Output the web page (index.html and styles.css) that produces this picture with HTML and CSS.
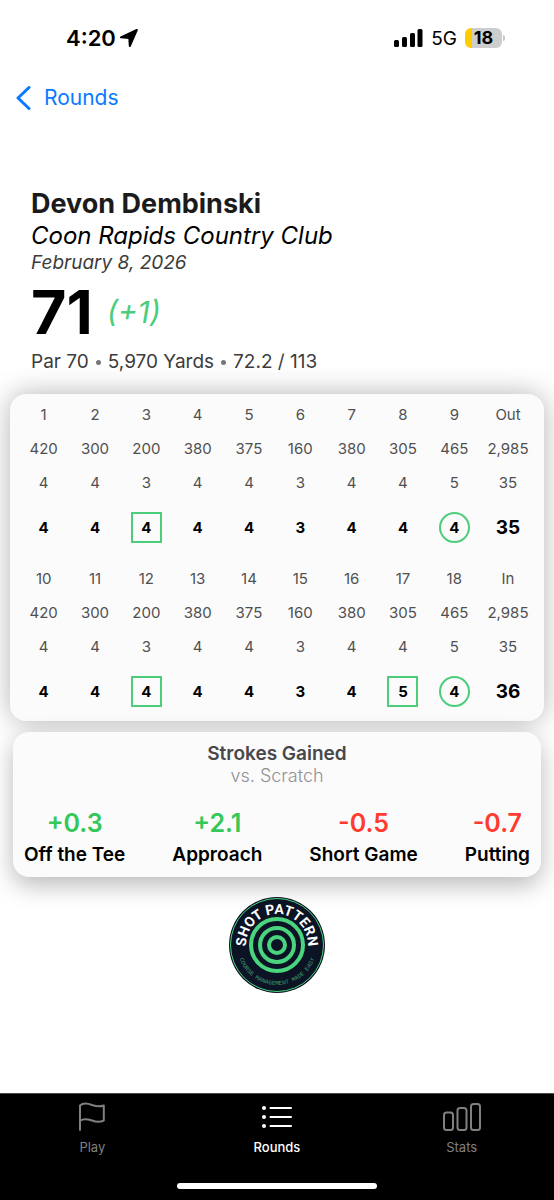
FILE: index.html
```html
<!DOCTYPE html>
<html lang="en">
<head>
<meta charset="utf-8">
<meta name="viewport" content="width=device-width, initial-scale=1">
<title>Round – Devon Dembinski</title>
<link rel="stylesheet" href="styles.css">
</head>
<body>
<header class="status">
  <div class="status-time">
    <span>4:20</span>
    <svg class="location" width="18" height="18" viewBox="0 0 18 18" aria-hidden="true"><path d="M16.800 1 1 8.300l8.300.6.500 8.100z"/></svg>
  </div>
  <div class="status-right">
    <svg width="29" height="18" viewBox="0 0 29 18" aria-hidden="true"><rect x="0" y="11" width="5" height="7" rx="1.500"/><rect x="8" y="8" width="5" height="10" rx="1.500"/><rect x="16" y="4" width="5" height="14" rx="1.500"/><rect x="23.500" y="0" width="5" height="18" rx="1.500"/></svg>
    <span class="network">5G</span>
    <span class="battery"><span class="battery-level">18</span></span>
  </div>
</header>

<nav class="back-nav">
  <a class="back" href="#rounds">
    <svg width="15" height="24" viewBox="0 0 15 24" aria-hidden="true"><path d="M13 1.500 2 12l11 10.500"/></svg>
    <span>Rounds</span>
  </a>
</nav>

<main>
  <section class="summary">
    <h1 class="player">Devon Dembinski</h1>
    <p class="course">Coon Rapids Country Club</p>
    <p class="date">February 8, 2026</p>
    <p class="total"><strong>71</strong><em>(+1)</em></p>
    <p class="details"><span>Par 70</span><i class="dot"></i><span>5,970 Yards</span><i class="dot"></i><span>72.2 / 113</span></p>
  </section>

  <section class="card scorecard" aria-label="Scorecard">
    <table>
      <colgroup><col span="9"><col class="sum-col"></colgroup>
      <tbody>
        <tr><th>1</th><th>2</th><th>3</th><th>4</th><th>5</th><th>6</th><th>7</th><th>8</th><th>9</th><th>Out</th></tr>
        <tr><td>420</td><td>300</td><td>200</td><td>380</td><td>375</td><td>160</td><td>380</td><td>305</td><td>465</td><td>2,985</td></tr>
        <tr><td>4</td><td>4</td><td>3</td><td>4</td><td>4</td><td>3</td><td>4</td><td>4</td><td>5</td><td>35</td></tr>
        <tr class="score"><td>4</td><td>4</td><td><span class="mark">4</span></td><td>4</td><td>4</td><td>3</td><td>4</td><td>4</td><td><span class="mark birdie">4</span></td><td class="sum">35</td></tr>
      </tbody>
    </table>
    <table>
      <colgroup><col span="9"><col class="sum-col"></colgroup>
      <tbody>
        <tr><th>10</th><th>11</th><th>12</th><th>13</th><th>14</th><th>15</th><th>16</th><th>17</th><th>18</th><th>In</th></tr>
        <tr><td>420</td><td>300</td><td>200</td><td>380</td><td>375</td><td>160</td><td>380</td><td>305</td><td>465</td><td>2,985</td></tr>
        <tr><td>4</td><td>4</td><td>3</td><td>4</td><td>4</td><td>3</td><td>4</td><td>4</td><td>5</td><td>35</td></tr>
        <tr class="score"><td>4</td><td>4</td><td><span class="mark">4</span></td><td>4</td><td>4</td><td>3</td><td>4</td><td><span class="mark">5</span></td><td><span class="mark birdie">4</span></td><td class="sum">36</td></tr>
      </tbody>
    </table>
  </section>

  <section class="card gained">
    <h2>Strokes Gained</h2>
    <p class="versus">vs. Scratch</p>
    <dl>
      <div><dt>Off the Tee</dt><dd class="gain">+0.3</dd></div>
      <div><dt>Approach</dt><dd class="gain">+2.1</dd></div>
      <div><dt>Short Game</dt><dd class="loss">-0.5</dd></div>
      <div><dt>Putting</dt><dd class="loss">-0.7</dd></div>
    </dl>
  </section>

  <svg class="logo" width="96" height="96" viewBox="-48 -48 96 96" role="img" aria-label="Shot Pattern">
    <defs>
      <path id="arc-top" d="M0 31A31 31 0 0 1 0 -31A31 31 0 0 1 0 31"/>
      <path id="arc-bottom" d="M0 -40A40 40 0 0 0 0 40A40 40 0 0 0 0 -40"/>
    </defs>
    <circle class="disc" r="48"/>
    <circle class="ring-thin" r="46.500"/>
    <circle class="ring" r="26"/>
    <circle class="ring" r="17"/>
    <circle class="ring" r="8"/>
    <text class="logo-name"><textPath href="#arc-top" startOffset="50%">SHOT PATTERN</textPath></text>
    <text class="logo-motto"><textPath href="#arc-bottom" startOffset="50%">COURSE MANAGEMENT MADE EASY</textPath></text>
  </svg>
</main>

<footer class="tabbar">
  <nav class="tabs">
    <a href="#play">
      <svg width="28" height="30" viewBox="0 0 28 30" aria-hidden="true"><path d="M2 28V3.500C5 .6 9.500 1.200 14 3c4.500 1.600 8 2 11.800.5v15c-3.800 2-7.300 1.700-11.800 0-4.500-1.600-9-2-12 .3"/></svg>
      <span>Play</span>
    </a>
    <a class="active" href="#rounds" aria-current="page">
      <svg width="32" height="30" viewBox="0 0 32 30" aria-hidden="true"><path d="M9.500 6H30M9.500 15H30M9.500 24H30"/><g class="bullets"><circle cx="3" cy="6" r="2"/><circle cx="3" cy="15" r="2"/><circle cx="3" cy="24" r="2"/></g></svg>
      <span>Rounds</span>
    </a>
    <a href="#stats">
      <svg width="40" height="30" viewBox="0 0 40 30" aria-hidden="true"><rect x="2" y="10.500" width="9" height="17.500" rx="2.500"/><rect x="15.500" y="6" width="9" height="22" rx="2.500"/><rect x="29" y="2" width="9" height="26" rx="2.500"/></svg>
      <span>Stats</span>
    </a>
  </nav>
  <div class="home-indicator"></div>
</footer>
</body>
</html>
```
FILE: styles.css
```css
* { box-sizing: border-box; }

body {
  margin: 0;
  min-height: 100vh;
  display: flex;
  flex-direction: column;
  background: #fff;
  color: #000;
  font-family: Inter, "Liberation Sans", sans-serif;
}

h1, h2, p, dl, dd { margin: 0; }
a { text-decoration: none; }

.status {
  display: flex;
  justify-content: space-between;
  align-items: center;
  height: 76px;
  padding: 0 49px 0 66px;
}
.status-time {
  display: flex;
  align-items: center;
  gap: 4px;
  font-size: 22px;
  font-weight: 600;
}
.location {
  stroke: #000;
  stroke-width: 2;
  stroke-linejoin: round;
}
.status-right {
  display: flex;
  align-items: center;
  gap: 8px;
}
.network { font-size: 19px; }
.battery {
  display: flex;
  align-items: center;
  gap: 1px;
}
.battery::after {
  content: "";
  width: 2px;
  height: 6px;
  border-radius: 0 2px 2px 0;
  background: #c8c8c8;
}
.battery-level {
  width: 37px;
  border-radius: 6px;
  background: linear-gradient(90deg, #fc0 7px, #cdcdcd 7px);
  font-size: 18px;
  line-height: 20px;
  font-weight: 700;
  text-align: center;
}

.back-nav { padding: 8px 16px; }
.back {
  display: inline-flex;
  align-items: center;
  gap: 13px;
  color: #087aff;
  font-size: 21px;
  line-height: 28px;
}
.back svg {
  fill: none;
  stroke: currentColor;
  stroke-width: 3;
  stroke-linecap: round;
  stroke-linejoin: round;
}

main {
  display: flex;
  flex-direction: column;
  padding: 66px 10px 24px;
}

.summary { padding: 0 21px; }
.player {
  color: #1b1b1c;
  font-size: 27px;
  line-height: 32px;
  font-weight: 700;
}
.course {
  font-size: 24px;
  line-height: 32px;
  font-style: italic;
}
.date {
  color: #3c3c3d;
  font-size: 19px;
  line-height: 22px;
  font-style: italic;
}
.total {
  display: flex;
  align-items: center;
  gap: 14px;
  line-height: 76px;
}
.total strong {
  font-size: 61px;
  font-weight: 700;
}
.total em {
  color: #4bcd7c;
  font-size: 30px;
}
.details {
  display: flex;
  align-items: center;
  gap: 7px;
  color: #3c3c3d;
  font-size: 19px;
  line-height: 24px;
}
.dot {
  width: 5px;
  height: 5px;
  border-radius: 50%;
  background: #777;
}

.card {
  border-radius: 16px;
  background: #fbfbfb;
  box-shadow: 0 0 28px rgba(0, 0, 0, .3);
}
.scorecard {
  display: flex;
  flex-direction: column;
  gap: 6px;
  margin-top: 20px;
  padding: 3px 8px 2px;
}

table {
  width: 100%;
  table-layout: fixed;
  border-collapse: collapse;
}
.sum-col { width: 56px; }
th, td {
  height: 34px;
  padding: 0;
  color: #505051;
  font-size: 15px;
  font-weight: 400;
  text-align: center;
  white-space: nowrap;
}
.score td {
  height: 56px;
  color: #000;
  font-weight: 700;
}
.score .sum { font-size: 19px; }
.mark {
  display: inline-block;
  width: 31px;
  border: 2px solid #4bcd7c;
  line-height: 27px;
}
.birdie { border-radius: 50%; }

.gained {
  margin: 11px 3px 0;
  padding: 11px 11px 10px;
  text-align: center;
  box-shadow: 0 8px 24px rgba(0, 0, 0, .28);
}
.gained h2 {
  color: #48484a;
  font-size: 19px;
  line-height: 22px;
  font-weight: 600;
}
.versus {
  color: #919195;
  font-size: 18px;
  line-height: 22px;
  font-weight: 300;
}
.gained dl {
  display: flex;
  justify-content: space-between;
  padding-top: 18px;
}
.gained dl div {
  display: flex;
  flex-direction: column-reverse;
  gap: 2px;
}
dt {
  font-size: 19px;
  line-height: 24px;
  font-weight: 600;
}
dd {
  font-size: 25px;
  line-height: 36px;
  font-weight: 600;
}
.gain { color: #34c759; }
.loss { color: #ff3b30; }

.logo {
  align-self: center;
  margin-top: 20px;
}
.disc { fill: #0c1325; }
.ring, .ring-thin {
  fill: none;
  stroke: #4bd47e;
  stroke-width: 4;
}
.ring-thin { stroke-width: 1; }
.logo text { text-anchor: middle; }
.logo-name {
  fill: #fff;
  font-family: Roboto, sans-serif;
  font-size: 14px;
  font-weight: 700;
}
.logo-motto {
  fill: #3e9d69;
  font-family: "Liberation Mono", monospace;
  font-size: 6px;
}

.tabbar {
  margin-top: auto;
  padding: 8px 0 11px;
  border-top: 1px solid #4a4a4a;
  background: #000;
}
.tabs {
  display: grid;
  grid-template-columns: repeat(3, 1fr);
}
.tabs a {
  display: flex;
  flex-direction: column;
  align-items: center;
  gap: 6px;
  color: #808080;
  font-size: 13px;
  line-height: 18px;
}
.tabs svg {
  fill: none;
  stroke: currentColor;
  stroke-width: 2;
  stroke-linecap: round;
  stroke-linejoin: round;
}
.tabs .active { color: #fff; font-weight: 500; }
.tabs .bullets { fill: currentColor; stroke: none; }
.home-indicator {
  width: 36%;
  height: 6px;
  margin: 27px auto 0;
  border-radius: 3px;
  background: #fff;
}
```
